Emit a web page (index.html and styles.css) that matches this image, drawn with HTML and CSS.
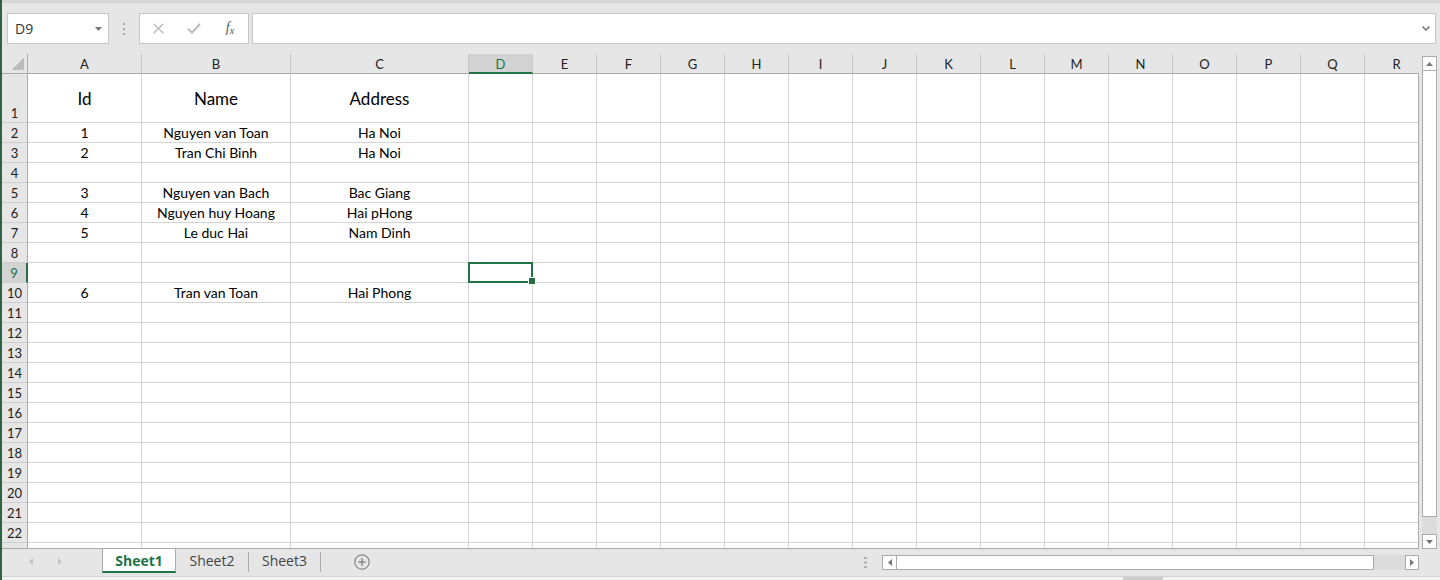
FILE: index.html
```html
<!DOCTYPE html>
<html lang="en">
<head>
<meta charset="utf-8">
<title>Sheet1</title>
<link rel="stylesheet" href="styles.css">
</head>
<body>
<div class="app">
  <div class="topline"></div>

  <div class="formula-bar">
    <div class="namebox">
      <span class="namebox-text">D9</span>
      <svg class="namebox-arrow" width="7" height="4" viewBox="0 0 7 4"><path d="M0 0h7L3.5 4z" fill="#777"/></svg>
    </div>
    <div class="grip">
      <svg width="2" height="12" viewBox="0 0 2 12"><rect x="0" y="0" width="2" height="2" fill="#a6a6a6"/><rect x="0" y="5" width="2" height="2" fill="#a6a6a6"/><rect x="0" y="10" width="2" height="2" fill="#a6a6a6"/></svg>
    </div>
    <div class="fxbox">
      <span class="fx-slot"><svg width="11" height="11" viewBox="0 0 11 11"><path d="M0.7 0.7L10.3 10.3M10.3 0.7L0.7 10.3" stroke="#b9b9b9" stroke-width="1.3" fill="none"/></svg></span>
      <span class="fx-slot"><svg width="14" height="11" viewBox="0 0 14 11"><path d="M1 5.6L5 9.6L13 1" stroke="#b9b9b9" stroke-width="2" fill="none"/></svg></span>
      <span class="fx-slot"><span class="fx-label">f<sub>x</sub></span></span>
    </div>
    <div class="formula-input">
      <svg width="8" height="5" viewBox="0 0 8 5"><path d="M0.6 0.6L4 4L7.4 0.6" stroke="#7a7a7a" stroke-width="1.6" fill="none"/></svg>
    </div>
  </div>

  <div class="sheet">
    <div class="sheet-main">
      <div class="colheads" id="colheads"></div>
      <div class="grid-body" id="grid-body"></div>
    </div>
    <div class="vscroll">
      <div class="sb-btn"><svg width="7" height="4" viewBox="0 0 7 4"><path d="M0 4h7L3.5 0z" fill="#777"/></svg></div>
      <div class="sb-thumb"></div>
      <div class="sb-track"></div>
      <div class="sb-btn"><svg width="7" height="4" viewBox="0 0 7 4"><path d="M0 0h7L3.5 4z" fill="#777"/></svg></div>
    </div>
  </div>

  <div class="tabbar">
    <div class="tab-nav">
      <svg width="4" height="7" viewBox="0 0 4 7"><path d="M4 0v7L0 3.5z" fill="#c4c4c4"/></svg>
      <svg class="tab-nav-next" width="4" height="7" viewBox="0 0 4 7"><path d="M0 0v7L4 3.5z" fill="#c4c4c4"/></svg>
    </div>
    <div class="tab tab-active">Sheet1</div>
    <div class="tab tab-2">Sheet2</div>
    <div class="tab-sep"></div>
    <div class="tab tab-3">Sheet3</div>
    <div class="tab-sep"></div>
    <div class="tab-add">
      <svg width="16" height="16" viewBox="0 0 16 16"><circle cx="8" cy="8" r="7.2" fill="none" stroke="#8a8a8a" stroke-width="1.3"/><path d="M8 4.3v7.4M4.3 8h7.4" stroke="#8a8a8a" stroke-width="1.6"/></svg>
    </div>
    <div class="tabbar-spacer"></div>
    <div class="split-dots">
      <svg width="3" height="11" viewBox="0 0 3 11"><rect x="0" y="0" width="3" height="2" fill="#b0b0b0"/><rect x="0" y="4.5" width="3" height="2" fill="#b0b0b0"/><rect x="0" y="9" width="3" height="2" fill="#b0b0b0"/></svg>
    </div>
    <div class="hscroll">
      <div class="sb-btn hbtn"><svg width="4" height="7" viewBox="0 0 4 7"><path d="M4 0v7L0 3.5z" fill="#777"/></svg></div>
      <div class="hthumb"></div>
      <div class="sb-track"></div>
      <div class="sb-btn hbtn hbtn-right"><svg width="4" height="7" viewBox="0 0 4 7"><path d="M0 0v7L4 3.5z" fill="#777"/></svg></div>
    </div>
  </div>

  <div class="statusbar"><div class="status-mark"></div></div>
</div>
<script src="app.js"></script>
</body>
</html>
```

FILE: styles.css
```css
* { box-sizing: border-box; }
html, body { margin: 0; padding: 0; }
body {
  width: 1440px;
  height: 580px;
  overflow: hidden;
  background: #e6e6e6;
  font-family: Lato, "Open Sans", sans-serif;
  color: #000;
}
.app {
  display: flex;
  flex-direction: column;
  height: 580px;
  border-left: 2px solid #2c6444;
}
.topline { flex: none; height: 3px; background: #d6d6d6; }

/* formula bar */
.formula-bar {
  flex: none;
  display: flex;
  height: 31px;
  margin: 10px 4px 10px 5px;
}
.namebox {
  flex: none;
  width: 102px;
  display: flex;
  align-items: center;
  justify-content: space-between;
  padding: 0 6px 0 7px;
  background: #fff;
  border: 1px solid #c6c6c6;
  font-family: "Open Sans", sans-serif;
  font-size: 14px;
  color: #333;
}
.grip {
  flex: none;
  width: 30px;
  display: flex;
  align-items: center;
  justify-content: center;
}
.fxbox {
  flex: none;
  width: 110px;
  display: flex;
  align-items: center;
  background: #fff;
  border: 1px solid #c6c6c6;
}
.fx-slot {
  width: 36px;
  display: flex;
  align-items: center;
  justify-content: center;
}
.fx-label {
  font-family: "Liberation Serif", serif;
  font-style: italic;
  font-size: 14px;
  color: #555;
  line-height: 1;
}
.fx-label sub { font-size: 10px; vertical-align: -2px; }
.formula-input {
  flex: 1;
  margin-left: 3px;
  display: flex;
  align-items: center;
  justify-content: flex-end;
  padding-right: 5px;
  background: #fff;
  border: 1px solid #c6c6c6;
}

/* sheet */
.sheet { flex: none; display: flex; height: 495px; }
.sheet-main {
  flex: none;
  width: 1417px;
  display: flex;
  flex-direction: column;
}
.colheads, .grid-body {
  display: grid;
  grid-template-columns: 26px 114px 149px 178px repeat(15, 64px);
  overflow: hidden;
}
.colheads { flex: none; height: 20px; grid-template-rows: 20px; }
.grid-body {
  flex: 1;
  grid-template-rows: 49px;
  grid-auto-rows: 20px;
  background: #fff;
  border-right: 1px solid #ababab;
  border-bottom: 1px solid #ababab;
}
.corner {
  display: flex;
  align-items: flex-end;
  justify-content: flex-end;
  padding: 0 3px 3px 0;
  border-right: 1px solid #ababab;
  border-bottom: 1px solid #ababab;
}
.corner-tri {
  width: 12px;
  height: 12px;
  background: linear-gradient(135deg, transparent 50%, #bdbdbd 50%);
}
.colhead {
  display: flex;
  align-items: center;
  justify-content: center;
  padding-top: 1px;
  font-size: 13px;
  color: #222;
  border-right: 1px solid #c6c6c6;
  border-bottom: 1px solid #ababab;
}
.colhead.is-selected {
  background: #d2d2d2;
  color: #217346;
  border-bottom: 2px solid #217346;
}
.rowhead {
  display: flex;
  align-items: center;
  justify-content: center;
  background: #e6e6e6;
  font-size: 13px;
  color: #222;
  border-right: 1px solid #ababab;
  border-bottom: 1px solid #cdcdcd;
}
.rowhead-tall { align-items: flex-end; padding-bottom: 1px; }
.rowhead.is-selected {
  background: #d2d2d2;
  color: #217346;
  border-right: 2px solid #217346;
}
.cell {
  display: flex;
  align-items: center;
  justify-content: center;
  white-space: nowrap;
  font-size: 14px;
  border-right: 1px solid #d4d4d4;
  border-bottom: 1px solid #d4d4d4;
}
.cell-title { font-size: 17px; }
.cell.is-active { position: relative; }
.cursor {
  position: absolute;
  top: -1px;
  left: -1px;
  right: -1px;
  bottom: -1px;
  border: 2px solid #217346;
  z-index: 2;
}
.fill-handle {
  position: absolute;
  right: -4px;
  bottom: -3px;
  width: 6px;
  height: 6px;
  background: #217346;
  box-shadow: 0 0 0 1px #fff;
}

/* scrollbars */
.vscroll {
  flex: none;
  width: 15px;
  height: 493px;
  margin: 2px 0 0 3px;
  display: flex;
  flex-direction: column;
}
.sb-btn {
  flex: none;
  height: 15px;
  display: flex;
  align-items: center;
  justify-content: center;
  background: #fff;
  border: 1px solid #ababab;
}
.sb-thumb {
  flex: none;
  height: 446px;
  background: #fff;
  border: 1px solid #ababab;
  border-top: 0;
}
.sb-track { flex: 1; background: #dcdcdc; }

/* tab bar */
.tabbar {
  flex: none;
  height: 27px;
  display: flex;
  align-items: flex-start;
}
.tab-nav {
  flex: none;
  width: 100px;
  height: 24px;
  display: flex;
  align-items: center;
  padding-left: 27px;
}
.tab-nav-next { margin-left: 25px; }
.tab {
  flex: none;
  height: 24px;
  display: flex;
  align-items: center;
  justify-content: center;
  font-family: "Open Sans", sans-serif;
  font-size: 14px;
  color: #444;
  border-bottom: 2px solid transparent;
}
.tab-active {
  width: 74px;
  background: #fff;
  border-left: 1px solid #ababab;
  border-right: 1px solid #ababab;
  border-bottom: 2px solid #217346;
  color: #217346;
  font-weight: 700;
}
.tab-2 { width: 72px; }
.tab-3 { width: 71px; }
.tab-sep {
  flex: none;
  width: 1px;
  height: 20px;
  margin-top: 3px;
  background: #ababab;
}
.tab-add {
  flex: none;
  display: flex;
  margin: 5px 0 0 33px;
}
.tabbar-spacer { flex: 1; }
.split-dots {
  flex: none;
  display: flex;
  margin: 8px 15px 0 0;
}
.hscroll {
  flex: none;
  width: 537px;
  height: 15px;
  margin: 6px 21px 0 0;
  display: flex;
}
.hbtn { width: 15px; }
.hbtn-right { width: 14px; }
.hthumb {
  flex: none;
  width: 477px;
  background: #fff;
  border: 1px solid #ababab;
  border-left: 0;
}

/* status strip */
.statusbar {
  flex: none;
  height: 4px;
  border-top: 1px solid #d2d2d2;
  background: #f3f3f3;
  padding-left: 1121px;
}
.status-mark { width: 40px; height: 3px; background: #cdcdcd; }
```

FILE: app.js
```js
(function () {
  var cols = 'ABCDEFGHIJKLMNOPQR'.split('');
  var data = {
    1: ['Id', 'Name', 'Address'],
    2: ['1', 'Nguyen van Toan', 'Ha Noi'],
    3: ['2', 'Tran Chi Binh', 'Ha Noi'],
    5: ['3', 'Nguyen van Bach', 'Bac Giang'],
    6: ['4', 'Nguyen huy Hoang', 'Hai pHong'],
    7: ['5', 'Le duc Hai', 'Nam Dinh'],
    10: ['6', 'Tran van Toan', 'Hai Phong']
  };
  var sel = { col: 'D', row: 9 };
  var visibleRows = 22;

  var head = '<div class="corner"><span class="corner-tri"></span></div>';
  cols.forEach(function (c) {
    head += '<div class="colhead' + (c === sel.col ? ' is-selected' : '') + '">' + c + '</div>';
  });
  document.getElementById('colheads').innerHTML = head;

  var body = '';
  /* one extra, partly hidden row below the last visible one keeps the gridlines running to the edge */
  for (var r = 1; r <= visibleRows + 1; r++) {
    var label = r <= visibleRows ? r : '';
    body += '<div class="rowhead' + (r === 1 ? ' rowhead-tall' : '') +
      (r === sel.row ? ' is-selected' : '') + '">' + label + '</div>';
    cols.forEach(function (c, i) {
      var v = (data[r] && data[r][i]) || '';
      var active = (r === sel.row && c === sel.col);
      body += '<div class="cell' + (r === 1 ? ' cell-title' : '') + (active ? ' is-active' : '') + '">' +
        v + (active ? '<span class="cursor"><span class="fill-handle"></span></span>' : '') + '</div>';
    });
  }
  document.getElementById('grid-body').innerHTML = body;
})();
```
